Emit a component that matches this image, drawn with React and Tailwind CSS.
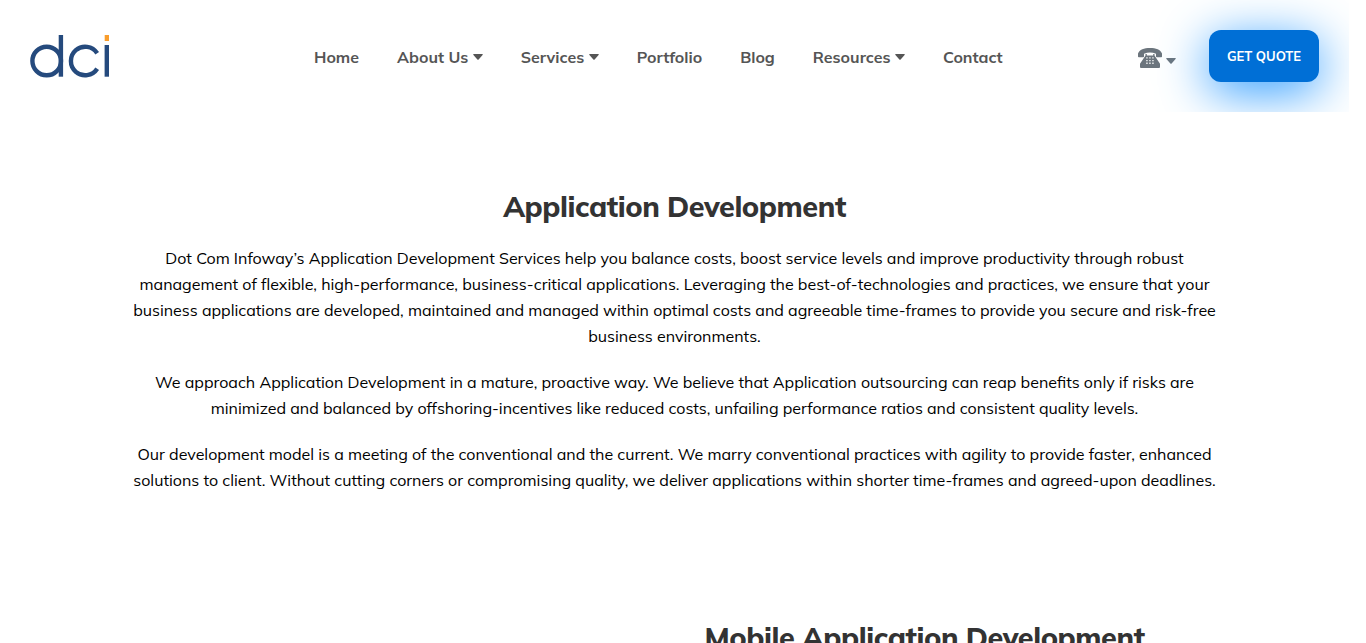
import React from "react";

const links = [
  { label: "Home" },
  { label: "About Us", menu: true },
  { label: "Services", menu: true },
  { label: "Portfolio" },
  { label: "Blog" },
  { label: "Resources", menu: true },
  { label: "Contact" },
];

const paragraphs = [
  "Dot Com Infoway’s Application Development Services help you balance costs, boost service levels and improve productivity through robust management of flexible, high-performance, business-critical applications. Leveraging the best-of-technologies and practices, we ensure that your business applications are developed, maintained and managed within optimal costs and agreeable time-frames to provide you secure and risk-free business environments.",
  "We approach Application Development in a mature, proactive way. We believe that Application outsourcing can reap benefits only if risks are minimized and balanced by offshoring-incentives like reduced costs, unfailing performance ratios and consistent quality levels.",
  "Our development model is a meeting of the conventional and the current. We marry conventional practices with agility to provide faster, enhanced solutions to client. Without cutting corners or compromising quality, we deliver applications within shorter time-frames and agreed-upon deadlines.",
];

function Caret({ className }) {
  return (
    <svg viewBox="0 0 11 6" preserveAspectRatio="none" className={className} fill="currentColor" aria-hidden="true">
      <path d="M.5 0H10.500Q11 .3 10.500 1L6.200 5.500Q5.500 6 4.800 5.500L.5 1Q0 .3 .5 0Z" />
    </svg>
  );
}

function Logo() {
  return (
    <svg className="mt-px h-[44px] w-[80px] shrink-0" viewBox="0 0 80 44" fill="none" aria-label="dci">
      <g stroke="#254a7d" strokeWidth="4.4">
        <circle cx="16.7" cy="26" r="14.3" />
        <path d="M30.900 0V41.700" />
        <path d="M67.200 18.200A14.300 14.300 0 1 0 67.200 33.800" />
        <path d="M76.800 10V41.700" />
      </g>
      <path d="M74.700 0h4.300v6h-4.300z" fill="#f99d2c" />
    </svg>
  );
}

function Phone() {
  return (
    <svg className="h-5 w-6" viewBox="0 0 24 20" fill="#6c757d" aria-hidden="true">
      <path d="M0 8.500V5.600C1.500 1.500 6 0 12 0s10.500 1.500 12 5.600v2.900q0 .8-.8.800h-4.400q-.8 0-.8-.8V5.800Q12 3 6 5.800v2.700q0 .8-.8.8H.8Q0 9.300 0 8.500Z" />
      <path fillRule="evenodd" d="M7.500 6h1.300v1.500h6.400V6h1.300v1.500L22 15.700V19q0 1-1 1H3q-1 0-1-1v-3.300L7.500 7.500ZM8.300 9.200v1.300h1.300V9.200Zm3 0v1.300h1.300V9.200Zm3 0v1.300h1.300V9.200ZM8.300 11.900v1.300h1.300V11.900Zm3 0v1.300h1.300V11.900Zm3 0v1.300h1.300V11.900ZM8.300 14.600v1.300h1.300v-1.300Zm3 0v1.300h1.300v-1.300Zm3 0v1.300h1.300v-1.300Z" />
    </svg>
  );
}

export default function App() {
  return (
    <div className="h-[643px] overflow-hidden bg-white pr-[17px] font-['Muli','Mulish','Lato',sans-serif]">
      <header className="flex h-[112px] items-center overflow-hidden px-[30px]">
        <Logo />
        <nav className="ml-[204px] flex gap-[38px] pt-px text-[16px] leading-6 font-bold text-[#555]">
          {links.map((l) => (
            <a key={l.label} className="flex items-center gap-[4.5px] whitespace-nowrap">
              {l.label}
              {l.menu && <Caret className="h-[6px] w-[10px]" />}
            </a>
          ))}
        </nav>
        <div className="mr-[33px] ml-auto flex items-center gap-1 pt-1 text-[#6c757d]">
          <Phone />
          <Caret className="mt-[5px] h-[6px] w-[10px]" />
        </div>
        <button className="h-[52px] w-[110px] shrink-0 rounded-xl bg-[#006fd6] pt-[2px] text-[13px] font-bold whitespace-nowrap text-white shadow-[0_10px_50px_#2b9aff]">
          GET QUOTE
        </button>
      </header>
      <main>
        <section className="pt-[76px] text-center">
          <h2 className="text-[28.8px] leading-[36px] font-extrabold tracking-[-0.45px] text-[#333]">Application Development</h2>
          <div className="mx-auto mt-[21px] flex w-[1110px] flex-col gap-5 text-[16px] leading-[26px] text-black">
            {paragraphs.map((text) => (
              <p key={text}>{text}</p>
            ))}
          </div>
        </section>
        <section className="pt-[126px] pl-[704.5px]">
          <h2 className="text-[28.8px] leading-[36px] font-extrabold tracking-[-0.45px] whitespace-nowrap text-[#333]">Mobile Application Development</h2>
        </section>
      </main>
    </div>
  );
}
